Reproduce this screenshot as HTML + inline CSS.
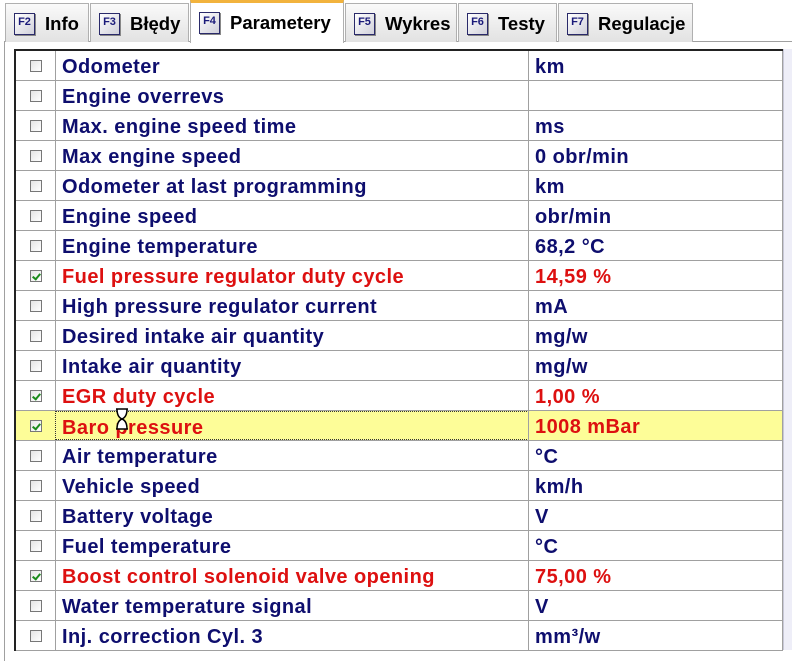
<!DOCTYPE html>
<html><head><meta charset="utf-8"><style>
*{margin:0;padding:0;box-sizing:border-box}
body{width:792px;height:650px;overflow:hidden;background:#fff;font-family:"Liberation Sans",Arial,sans-serif;position:relative}
.tab{position:absolute;top:3px;height:39px;border:1px solid #b0b0b0;border-bottom:none;background:linear-gradient(#fafafa,#e2e2e2);font-weight:bold;font-size:18.5px;color:#000;display:flex;align-items:center;padding-left:8px;padding-top:2px}
.tab.act{top:0;height:43px;background:#fff;border-top:3px solid #f2b33d;z-index:2;padding-top:0}
.k{width:21px;height:22px;border:1px solid #2a2a6a;background:linear-gradient(135deg,#fff,#d0d0da);font-size:11px;color:#1a1a7a;display:inline-flex;align-items:flex-start;justify-content:center;padding-top:2px;margin-right:10px;font-weight:bold;box-shadow:1px 1px 0 #888}
.panel{position:absolute;left:4px;top:41px;width:800px;height:620px;border-left:1px solid #a0a0a0;border-top:1px solid #a0a0a0}
.tbl{position:absolute;left:14px;top:49px;width:769px;border-top:2px solid #222;border-left:2px solid #222}
.row{height:30px;border-bottom:1px solid #a0a0a0;position:relative;font-weight:bold;font-size:20px;letter-spacing:0.45px;color:#0e0e6e}
.row.r{color:#dd1010}
.row.y{background:#fdfd98}
.cb{position:absolute;left:14px;top:9px;width:12px;height:12px;border:1px solid #777;background:linear-gradient(135deg,#e4e4e4,#fff)}
.cb.c::after{content:"";position:absolute;left:3px;top:1px;width:3px;height:6px;border:solid #1a8a1a;border-width:0 2px 2px 0;transform:rotate(40deg)}
.n{position:absolute;left:39px;top:0;width:474px;height:29px;border-left:1px solid #a0a0a0;padding-left:6px;line-height:32px}
.y .n{border:1px dotted #333}
.v{position:absolute;left:512px;top:0;width:255px;height:29px;border-left:1px solid #a0a0a0;border-right:1px solid #a0a0a0;padding-left:6px;line-height:32px}
.sb{position:absolute;left:783px;top:49px;width:9px;height:601px;background:#eeeef8;border-left:1px solid #c8c8d8}
</style></head><body>
<div class="panel"></div>
<div class="tab" style="left:5px;width:84px"><span class="k">F2</span>Info</div>
<div class="tab" style="left:90px;width:99px"><span class="k">F3</span>Błędy</div>
<div class="tab act" style="left:190px;width:154px"><span class="k">F4</span>Parametery</div>
<div class="tab" style="left:345px;width:112px"><span class="k">F5</span>Wykres</div>
<div class="tab" style="left:458px;width:99px"><span class="k">F6</span>Testy</div>
<div class="tab" style="left:558px;width:135px"><span class="k">F7</span>Regulacje</div>
<div class="tbl">
<div class="row"><span class="cb"></span><div class="n">Odometer</div><div class="v">km</div></div>
<div class="row"><span class="cb"></span><div class="n">Engine overrevs</div><div class="v"></div></div>
<div class="row"><span class="cb"></span><div class="n">Max. engine speed time</div><div class="v">ms</div></div>
<div class="row"><span class="cb"></span><div class="n">Max engine speed</div><div class="v">0 obr/min</div></div>
<div class="row"><span class="cb"></span><div class="n">Odometer at last programming</div><div class="v">km</div></div>
<div class="row"><span class="cb"></span><div class="n">Engine speed</div><div class="v">obr/min</div></div>
<div class="row"><span class="cb"></span><div class="n">Engine temperature</div><div class="v">68,2 °C</div></div>
<div class="row r"><span class="cb c"></span><div class="n">Fuel pressure regulator duty cycle</div><div class="v">14,59 %</div></div>
<div class="row"><span class="cb"></span><div class="n">High pressure regulator current</div><div class="v">mA</div></div>
<div class="row"><span class="cb"></span><div class="n">Desired intake air quantity</div><div class="v">mg/w</div></div>
<div class="row"><span class="cb"></span><div class="n">Intake air quantity</div><div class="v">mg/w</div></div>
<div class="row r"><span class="cb c"></span><div class="n">EGR duty cycle</div><div class="v">1,00 %</div></div>
<div class="row r y"><span class="cb c"></span><div class="n">Baro pressure</div><div class="v">1008 mBar</div></div>
<div class="row"><span class="cb"></span><div class="n">Air temperature</div><div class="v">°C</div></div>
<div class="row"><span class="cb"></span><div class="n">Vehicle speed</div><div class="v">km/h</div></div>
<div class="row"><span class="cb"></span><div class="n">Battery voltage</div><div class="v">V</div></div>
<div class="row"><span class="cb"></span><div class="n">Fuel temperature</div><div class="v">°C</div></div>
<div class="row r"><span class="cb c"></span><div class="n">Boost control solenoid valve opening</div><div class="v">75,00 %</div></div>
<div class="row"><span class="cb"></span><div class="n">Water temperature signal</div><div class="v">V</div></div>
<div class="row"><span class="cb"></span><div class="n">Inj. correction Cyl. 3</div><div class="v">mm³/w</div></div>
</div>
<div class="sb"></div>
<svg style="position:absolute;left:115px;top:408px" width="14" height="22"><path d="M1 1H13M1 21H13M2 1Q2 9 7 11Q12 9 12 1M2 21Q2 13 7 11Q12 13 12 21" fill="#fff" stroke="#000" stroke-width="1.5"/></svg>
</body></html>
